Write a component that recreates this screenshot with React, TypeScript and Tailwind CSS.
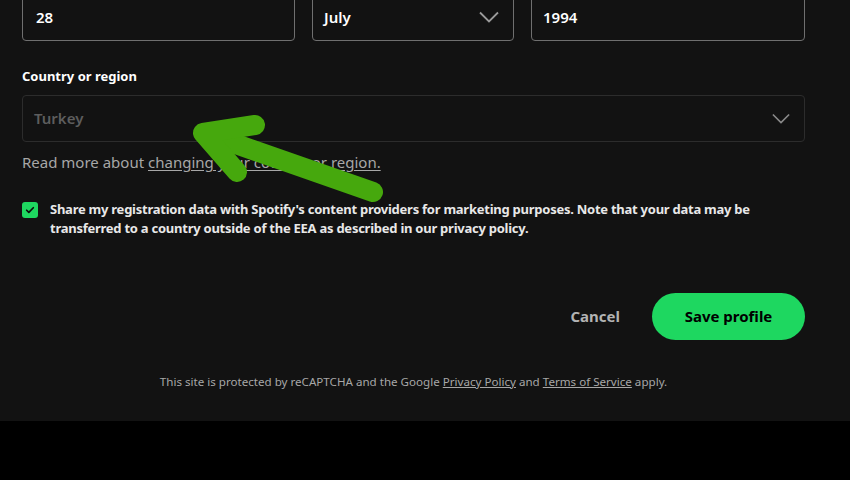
import React from "react";

const font = { fontFamily: '"Noto Sans", "Open Sans", Arial, sans-serif' };

function Chevron({ className }: { className?: string }) {
  return (
    <svg viewBox="0 0 20 12" className={className} fill="none" stroke="currentColor" strokeWidth="1.8">
      <path d="M1 1.5l9 9 9-9" />
    </svg>
  );
}

function Arrow() {
  return (
    <svg className="absolute left-0 top-0 pointer-events-none" width="850" height="421" viewBox="0 0 850 421">
      <g stroke="#46a80d" strokeWidth="20" strokeLinecap="round" strokeLinejoin="round" fill="none">
        <path d="M373 192 L210 135" />
        <path d="M255 125 L203 133 L237 172" />
      </g>
    </svg>
  );
}

export default function App() {
  return (
    <div className="w-[850px] h-[480px] bg-black overflow-hidden" style={font}>
      <div className="relative h-[421px] bg-[#121212] pl-[22px] pr-[45px] overflow-hidden">
        {/* birth date row */}
        <div className="grid grid-cols-[273px_202px_1fr] gap-[17px] -mt-[7px]">
          <div className="h-[48px] rounded-[4px] border border-[#6f6f6f] flex items-center px-[13px] text-white text-[15px] font-semibold">
            28
          </div>
          <div className="h-[48px] rounded-[4px] border border-[#6f6f6f] flex items-center justify-between pl-[11px] pr-[14px] text-white text-[15px] font-semibold">
            <span>July</span>
            <Chevron className="w-[20px] h-[12px] text-[#9a9a9a]" />
          </div>
          <div className="h-[48px] rounded-[4px] border border-[#6f6f6f] flex items-center px-[11px] text-white text-[15px] font-semibold">
            1994
          </div>
        </div>

        {/* country */}
        <div className="mt-[27px] text-[13px] font-bold text-white leading-[16px]">Country or region</div>
        <div className="mt-[11px] h-[47px] rounded-[4px] border border-[#2c2c2c] flex items-center justify-between pl-[11px] pr-[14px]">
          <span className="text-[15px] font-semibold text-[#5d5d5d]">Turkey</span>
          <Chevron className="w-[18px] h-[11px] text-[#8a8a8a]" />
        </div>
        <p className="mt-[10px] text-[15px] text-[#a7a7a7] leading-[20px]">
          Read more about{" "}
          <span className="underline underline-offset-2">changing your country or region.</span>
        </p>

        {/* marketing checkbox */}
        <div className="mt-[28px] flex gap-[12px]">
          <div className="mt-[2px] w-[16px] h-[16px] shrink-0 rounded-[3px] bg-[#1ed760] flex items-center justify-center">
            <svg viewBox="0 0 12 12" className="w-[10px] h-[10px]" fill="none" stroke="#0c0c0c" strokeWidth="2" strokeLinecap="round" strokeLinejoin="round">
              <path d="M2 6.3l2.6 2.5L10 3.3" />
            </svg>
          </div>
          <p className="text-[13px] font-bold text-[#e8e8e8] leading-[19px] tracking-[-0.25px]">
            Share my registration data with Spotify's content providers for marketing purposes. Note that your data may be transferred to a country outside of the EEA as described in our privacy policy.
          </p>
        </div>

        {/* actions */}
        <div className="mt-[55px] flex items-center justify-end gap-[32px]">
          <button className="text-[15px] font-bold text-[#b3b3b3]">Cancel</button>
          <button className="h-[47px] w-[153px] rounded-full bg-[#1ed760] text-[15px] font-bold text-black">
            Save profile
          </button>
        </div>

        <p className="mt-[33px] text-center text-[11.6px] text-[#a7a7a7]">
          This site is protected by reCAPTCHA and the Google <span className="underline">Privacy Policy</span> and{" "}
          <span className="underline">Terms of Service</span> apply.
        </p>

        <Arrow />
      </div>
    </div>
  );
}
